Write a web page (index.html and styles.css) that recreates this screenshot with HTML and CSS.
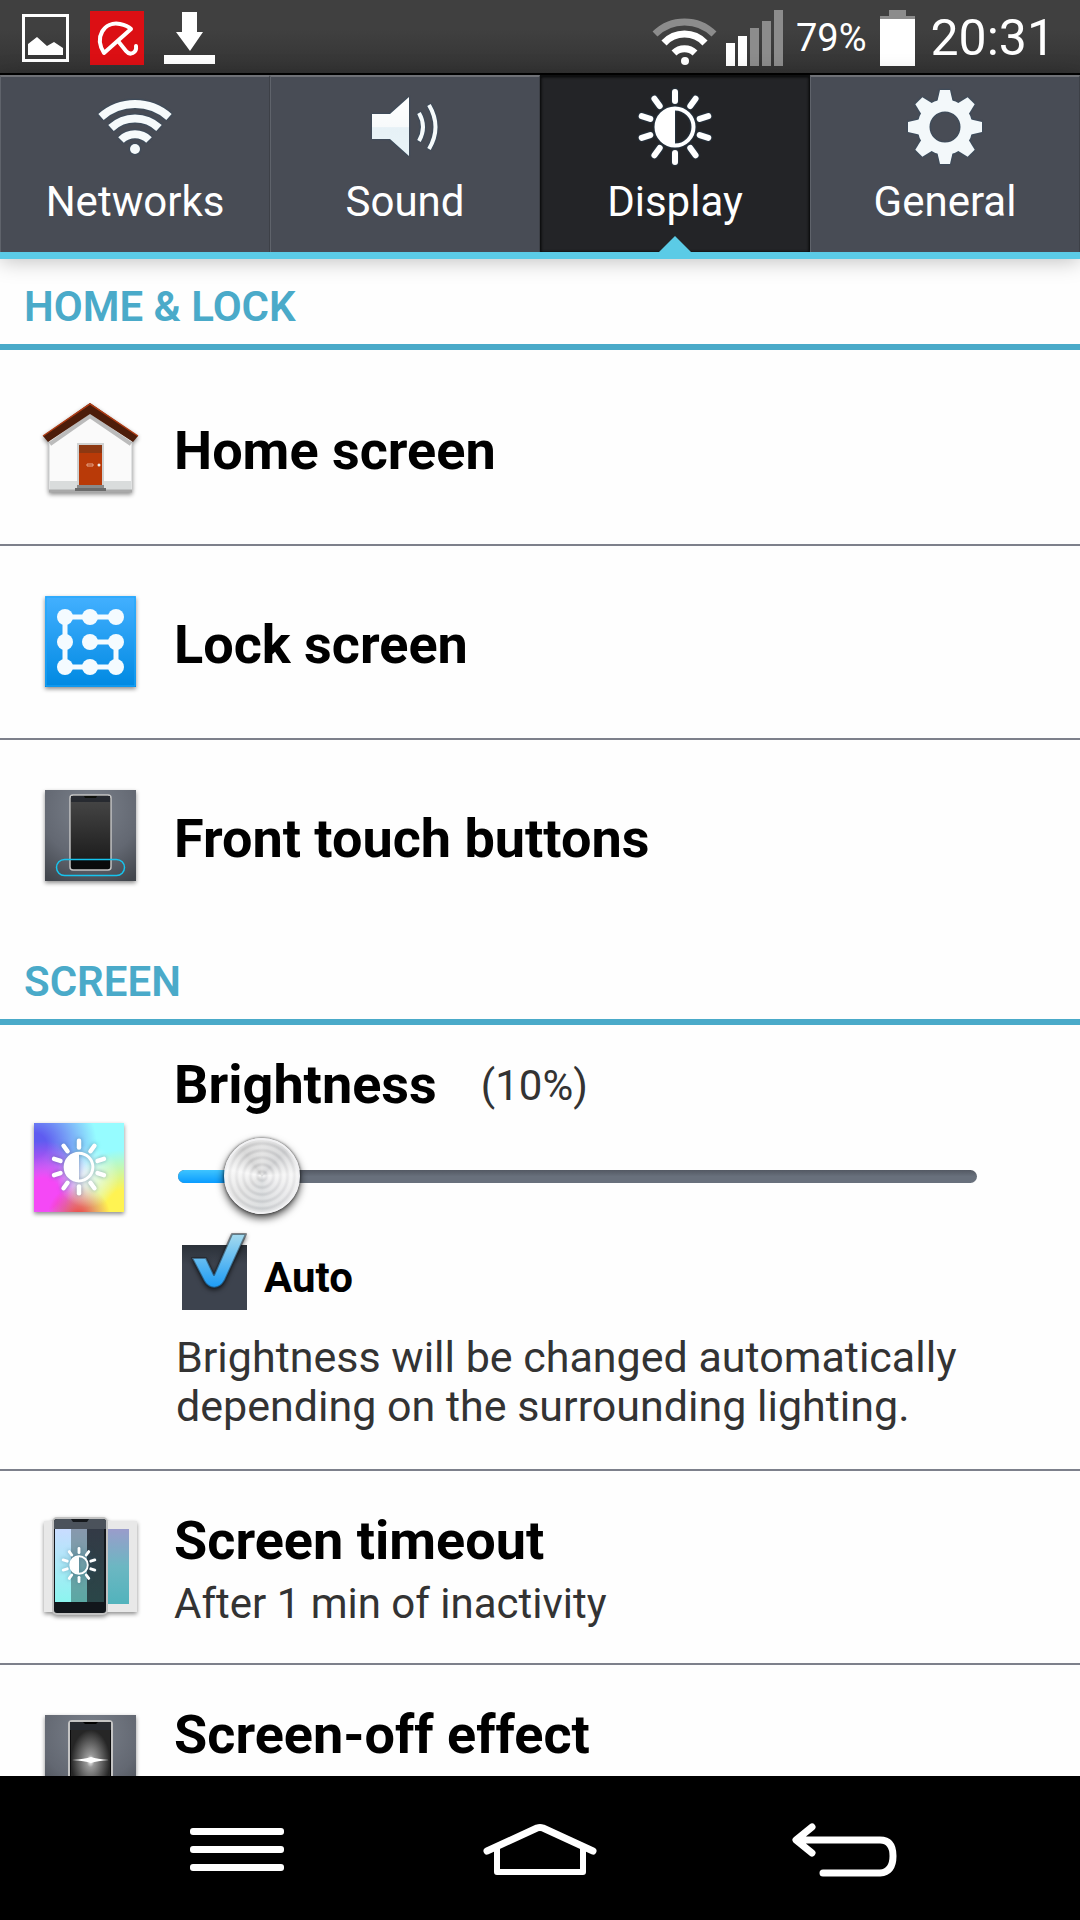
FILE: index.html
```html
<!DOCTYPE html>
<html lang="en">
<head>
    <meta charset="UTF-8">
    <meta name="viewport" content="width=device-width, initial-scale=1.0">
    <title>Settings - Display</title>
    <link rel="stylesheet" href="styles.css">
</head>
<body>
    <!-- shared shapes -->
    <svg class="defs" width="0" height="0" aria-hidden="true">
        <defs>
            <linearGradient id="gloss" x1="0" y1="0" x2="0" y2="1">
                <stop offset="0" stop-color="#fff"/>
                <stop offset=".5" stop-color="#f7fafb"/>
                <stop offset=".52" stop-color="#e6f1f6"/>
                <stop offset="1" stop-color="#e9f4f8"/>
            </linearGradient>
            <linearGradient id="blueTile" x1="0" y1="0" x2="0" y2="1">
                <stop offset="0" stop-color="#43b0ff"/>
                <stop offset="1" stop-color="#0089e2"/>
            </linearGradient>
            <radialGradient id="grayTile" cx=".5" cy=".2" r=".9">
                <stop offset="0" stop-color="#7b818b"/>
                <stop offset=".6" stop-color="#636872"/>
                <stop offset="1" stop-color="#41454c"/>
            </radialGradient>
            <linearGradient id="glass" x1="0" y1="0" x2="0" y2="1">
                <stop offset="0" stop-color="#444"/>
                <stop offset="1" stop-color="#1d1d1d"/>
            </linearGradient>
            <symbol id="sun" viewBox="-40 -40 80 80">
                <g stroke="currentColor" stroke-width="6" stroke-linecap="round">
                    <path d="M0-26V-35"/>
                    <path d="M0-26V-35" transform="rotate(36)"/>
                    <path d="M0-26V-35" transform="rotate(72)"/>
                    <path d="M0-26V-35" transform="rotate(108)"/>
                    <path d="M0-26V-35" transform="rotate(144)"/>
                    <path d="M0-26V-35" transform="rotate(180)"/>
                    <path d="M0-26V-35" transform="rotate(216)"/>
                    <path d="M0-26V-35" transform="rotate(252)"/>
                    <path d="M0-26V-35" transform="rotate(288)"/>
                    <path d="M0-26V-35" transform="rotate(324)"/>
                </g>
                <circle r="18.5" fill="none" stroke="currentColor" stroke-width="4"/>
                <path d="M0-18A18 18 0 0 0 0 18Z" fill="currentColor"/>
            </symbol>
        </defs>
    </svg>

    <div class="status-bar">
        <div class="status-left">
            <svg width="48" height="48" viewBox="0 0 48 48">
                <rect x="1.5" y="1.5" width="44" height="45" fill="none" stroke="#fff" stroke-width="3"/>
                <path d="M6 41V30L15 23L25 32L32 28L41 34V41Z" fill="#fff"/>
            </svg>
            <svg width="54" height="54" viewBox="0 0 54 54">
                <rect width="54" height="54" fill="#dc0f14"/>
                <path d="M14 42C4 26 14 10 30 13C35 14 38 15 41 18L14 42M28 30L36 40C40 45 47 42 46 35" fill="none" stroke="#fff" stroke-width="4" stroke-linejoin="round" stroke-linecap="round"/>
            </svg>
            <svg width="51" height="54" viewBox="0 0 51 54">
                <path d="M18 1H33V21H39L26 40L12 21H18ZM0 44H51V53H0Z" fill="#fff"/>
            </svg>
        </div>
        <div class="status-right">
            <svg width="65" height="56" viewBox="0 0 65 56" fill="none" stroke="#fff" stroke-width="7">
                <path d="M3 24A42 42 0 0 1 62 24" stroke="#8c8c8c"/>
                <path d="M12 33A28 28 0 0 1 53 33"/>
                <path d="M22 43A15 15 0 0 1 43 43"/>
                <circle cx="33" cy="51" r="4" fill="#fff" stroke="none"/>
            </svg>
            <svg class="signal" width="57" height="56" viewBox="0 0 57 56">
                <path d="M0 33h9v23h-9ZM12 26h9v30h-9Z" fill="#fff"/>
                <path d="M24 18h9v38h-9ZM36 11h9v45h-9ZM48 0h9v56h-9Z" fill="#8c8c8c"/>
            </svg>
            <span class="percent">79%</span>
            <svg width="35" height="56" viewBox="0 0 35 56">
                <path d="M9 0H26V6H35V9H0V6H9Z" fill="#8c8c8c"/>
                <path d="M0 9H35V56H0Z" fill="#fff"/>
            </svg>
            <span class="clock">20:31</span>
        </div>
    </div>

    <div class="tabs" role="tablist">
        <button class="tab" role="tab">
            <svg class="tab-icon" viewBox="0 0 80 80" fill="none" stroke="#f6fafb" stroke-width="8">
                <path d="M6 30A51 51 0 0 1 74 30"/>
                <path d="M16 41A35 35 0 0 1 64 41"/>
                <path d="M26 53A20 20 0 0 1 54 53"/>
                <circle cx="40" cy="62" r="5" fill="#f6fafb" stroke="none"/>
            </svg>
            Networks
        </button>
        <button class="tab" role="tab">
            <svg class="tab-icon" viewBox="0 0 80 80">
                <path d="M7 27H25L44 10V69L25 52H7Z" fill="url(#gloss)"/>
                <path d="M54 26Q62 40 54 54M64 18Q77 40 64 62" fill="none" stroke="#f6fafb" stroke-width="4"/>
            </svg>
            Sound
        </button>
        <button class="tab selected" role="tab" aria-selected="true">
            <svg class="tab-icon" viewBox="0 0 80 80"><use href="#sun"/></svg>
            Display
        </button>
        <button class="tab" role="tab">
            <svg class="tab-icon" viewBox="-40 -40 80 80" fill="#f3f8fa">
                <circle r="21.5" fill="none" stroke="#f3f8fa" stroke-width="12"/>
                <path id="tooth" d="M-5-37H5L8-24H-8Z"/>
                <use href="#tooth" transform="rotate(45)"/>
                <use href="#tooth" transform="rotate(90)"/>
                <use href="#tooth" transform="rotate(135)"/>
                <use href="#tooth" transform="rotate(180)"/>
                <use href="#tooth" transform="rotate(225)"/>
                <use href="#tooth" transform="rotate(270)"/>
                <use href="#tooth" transform="rotate(315)"/>
            </svg>
            General
        </button>
    </div>

    <main class="content">
        <h2 class="section-title">HOME &amp; LOCK</h2>
        <ul class="list">
            <li class="row">
                <svg class="row-icon" viewBox="0 0 98 98">
                    <path d="M8 38L49 10L91 38V92H8Z" fill="#fafafa" stroke="#c9cbcc"/>
                    <path d="M9 82H90V91H9Z" fill="#d9dcdc"/>
                    <path d="M8 92H91" stroke="#a9a9a9" stroke-width="3"/>
                    <path d="M9 45L49 17L90 45" fill="none" stroke="#000" stroke-opacity=".25" stroke-width="4"/>
                    <path d="M2 37L49 4L97 37L92 43L49 15L7 43Z" fill="#4d1d0a"/>
                    <path d="M2 37L49 5L97 37" fill="none" stroke="#b03c14" stroke-width="1.5"/>
                    <path d="M37 86V45H62V86" fill="#b93a08" stroke="#d0d2d2" stroke-width="2"/>
                    <path d="M38 46H61V54H38Z" fill="#8d3812"/>
                    <path d="M46 65H52V67H46Z" fill="none" stroke="#e5a58a"/>
                    <circle cx="58" cy="66" r="1.5" fill="#eee"/>
                    <path d="M36 86H63V89H36Z" fill="#8a8a8a"/>
                    <path d="M34 89H65V92H34Z" fill="#6b6b6b"/>
                </svg>
                <div class="row-text"><h3>Home screen</h3></div>
            </li>
            <li class="row">
                <svg class="row-icon" viewBox="0 0 98 98">
                    <rect x="4" y="3" width="91" height="91" fill="url(#blueTile)"/>
                    <path d="M5 4H94V93H5Z" fill="none" stroke="#1fa6fa" stroke-width="1"/>
                    <path d="M75 24H24V74H75V49H49" fill="none" stroke="#f4fbff" stroke-width="5"/>
                    <g fill="#f4fbff">
                        <circle cx="24" cy="24" r="8"/><circle cx="49" cy="24" r="8"/><circle cx="75" cy="24" r="8"/>
                        <circle cx="24" cy="49" r="8"/><circle cx="49" cy="49" r="8"/><circle cx="75" cy="49" r="8"/>
                        <circle cx="24" cy="74" r="8"/><circle cx="49" cy="74" r="8"/><circle cx="75" cy="74" r="8"/>
                    </g>
                </svg>
                <div class="row-text"><h3>Lock screen</h3></div>
            </li>
            <li class="row">
                <svg class="row-icon" viewBox="0 0 98 98">
                    <rect x="4" y="3" width="91" height="91" fill="url(#grayTile)"/>
                    <rect x="29" y="8" width="41" height="75" rx="3" fill="#0a0a0b" stroke="#c4c4c4" stroke-width="1.5"/>
                    <path d="M30 9H69V15H30Z" fill="#272a30"/>
                    <path d="M43 9H56L55 11H44Z" fill="#0d0f0a"/>
                    <path d="M30 15H69V73H30Z" fill="url(#glass)"/>
                    <rect x="15.5" y="72.5" width="68" height="16" rx="8" fill="none" stroke="#16c4ee" stroke-width="1.5"/>
                </svg>
                <div class="row-text"><h3>Front touch buttons</h3></div>
            </li>
        </ul>

        <h2 class="section-title">SCREEN</h2>
        <ul class="list">
            <li class="row brightness">
                <svg class="row-icon" viewBox="0 0 98 98">
                    <defs>
                        <radialGradient id="cBlue" cx="0" cy=".25" r=".7"><stop offset=".2" stop-color="#5f5cf0"/><stop offset="1" stop-color="#5f5cf0" stop-opacity="0"/></radialGradient>
                        <radialGradient id="cPink" cx=".1" cy=".8" r=".6"><stop offset=".3" stop-color="#f548f6"/><stop offset="1" stop-color="#f548f6" stop-opacity="0"/></radialGradient>
                        <radialGradient id="cYellow" cx="1" cy=".95" r=".65"><stop offset=".3" stop-color="#fff352"/><stop offset="1" stop-color="#fff352" stop-opacity="0"/></radialGradient>
                        <radialGradient id="cRed" cx=".5" cy="1.05" r=".35"><stop offset="0" stop-color="#f0403c"/><stop offset="1" stop-color="#f0403c" stop-opacity="0"/></radialGradient>
                        <radialGradient id="cWhite" cx=".6" cy=".6" r=".35"><stop offset="0" stop-color="#fff" stop-opacity=".8"/><stop offset="1" stop-color="#fff" stop-opacity="0"/></radialGradient>
                    </defs>
                    <rect x="4" y="4" width="90" height="89" fill="#96fcff"/>
                    <rect x="4" y="4" width="90" height="89" fill="url(#cBlue)"/>
                    <rect x="4" y="4" width="90" height="89" fill="url(#cPink)"/>
                    <rect x="4" y="4" width="90" height="89" fill="url(#cYellow)"/>
                    <rect x="4" y="4" width="90" height="89" fill="url(#cRed)"/>
                    <rect x="4" y="4" width="90" height="89" fill="url(#cWhite)"/>
                    <use class="sun-mark" href="#sun" x="19" y="18" width="60" height="60"/>
                </svg>
                <div class="row-text">
                    <div class="brightness-head">
                        <h3><label for="brightness">Brightness</label></h3>
                        <output class="sub" for="brightness">(10%)</output>
                    </div>
                    <div class="slider">
                        <div class="track"><div class="fill" style="width: 10%"></div></div>
                        <input type="range" id="brightness" min="0" max="100" value="10">
                    </div>
                    <div class="auto">
                        <span class="check">
                            <input type="checkbox" id="auto" checked>
                            <svg class="tick" viewBox="0 0 65 80">
                                <defs>
                                    <linearGradient id="tickBlue" x1="0" y1="0" x2="0" y2="1">
                                        <stop offset="0" stop-color="#a5daee"/>
                                        <stop offset="1" stop-color="#1c9bf5"/>
                                    </linearGradient>
                                </defs>
                                <path d="M10 28H24L32 45L50 4H64L43 50C38 60 27 60 22 51Z" fill="url(#tickBlue)" stroke="#1c2026" stroke-opacity=".5" stroke-width="2" stroke-linejoin="round"/>
                            </svg>
                        </span>
                        <label for="auto">Auto</label>
                    </div>
                    <p class="description">Brightness will be changed automatically depending on the surrounding lighting.</p>
                </div>
            </li>
            <li class="row">
                <svg class="row-icon" viewBox="0 0 98 98">
                    <defs>
                        <linearGradient id="s1" x1="0" y1="0" x2="0" y2="1"><stop offset="0" stop-color="#c9dcff"/><stop offset="1" stop-color="#8cf5ef"/></linearGradient>
                        <linearGradient id="s2" x1="0" y1="0" x2="0" y2="1"><stop offset="0" stop-color="#8898ad"/><stop offset="1" stop-color="#5ba8a3"/></linearGradient>
                        <linearGradient id="s3" x1="0" y1="0" x2="0" y2="1"><stop offset="0" stop-color="#333a46"/><stop offset="1" stop-color="#2a4648"/></linearGradient>
                        <linearGradient id="s4" x1="0" y1="0" x2="0" y2="1"><stop offset="0" stop-color="#9a9ccb"/><stop offset=".5" stop-color="#6cb7c2"/><stop offset="1" stop-color="#52b3bc"/></linearGradient>
                    </defs>
                    <rect x="3" y="3" width="93" height="91" fill="#e8e8e8"/>
                    <rect x="60" y="11" width="28" height="75" fill="url(#s4)"/>
                    <rect x="12" y="0" width="54" height="96" rx="4" fill="#12161b" stroke="#c2c2c2" stroke-width="2"/>
                    <path d="M13 4Q13 1 16 1H62Q65 1 65 4V11H13Z" fill="#4b525b"/>
                    <path d="M30 1H48L46 4H32Z" fill="#15181c"/>
                    <rect x="14" y="11" width="16" height="73" fill="url(#s1)"/>
                    <rect x="30" y="11" width="16" height="73" fill="url(#s2)"/>
                    <rect x="46" y="11" width="17" height="73" fill="url(#s3)"/>
                    <use class="sun-mark" href="#sun" x="19" y="28" width="38" height="38"/>
                </svg>
                <div class="row-text">
                    <h3>Screen timeout</h3>
                    <p class="sub">After 1 min of inactivity</p>
                </div>
            </li>
            <li class="row row-top">
                <svg class="row-icon" viewBox="0 0 98 98">
                    <defs>
                        <radialGradient id="glow"><stop offset="0" stop-color="#fff"/><stop offset=".2" stop-color="#999"/><stop offset="1" stop-color="#262626"/></radialGradient>
                    </defs>
                    <rect x="4" y="3" width="91" height="91" fill="url(#grayTile)"/>
                    <rect x="28" y="9" width="43" height="84" rx="3" fill="#0a0a0b" stroke="#c4c4c4" stroke-width="2"/>
                    <path d="M29 10H70V18H29Z" fill="#272a30"/>
                    <path d="M42 10H57L55 12H44Z" fill="#000"/>
                    <rect x="30" y="18" width="39" height="62" fill="url(#glow)"/>
                    <path d="M31 48Q44 47 50 45Q56 47 68 48Q56 49 50 51Q44 49 31 48Z" fill="#fff"/>
                </svg>
                <div class="row-text"><h3>Screen-off effect</h3></div>
            </li>
        </ul>
    </main>

    <nav class="nav-bar">
        <button aria-label="Menu">
            <svg width="94" height="44" viewBox="0 0 94 44" fill="#fff">
                <rect width="94" height="7" rx="3"/>
                <rect y="18" width="94" height="7" rx="3"/>
                <rect y="36" width="94" height="7" rx="3"/>
            </svg>
        </button>
        <button aria-label="Home">
            <svg width="114" height="52" viewBox="0 0 114 52" fill="none" stroke="#fff" stroke-width="7" stroke-linecap="round" stroke-linejoin="round">
                <path d="M4 27L54 4Q57 3 60 4L110 27"/>
                <path d="M14 24V48H100V24" stroke-width="6"/>
            </svg>
        </button>
        <button aria-label="Back">
            <svg width="102" height="54" viewBox="0 0 102 54" fill="none" stroke="#fff" stroke-width="7" stroke-linecap="round" stroke-linejoin="round">
                <path d="M20 4L4 17L20 30M6 17H88Q101 17 101 33T88 50H31"/>
            </svg>
        </button>
    </nav>
</body>
</html>
```
FILE: styles.css
```css
* {
    box-sizing: border-box;
}
body {
    font-family: Roboto, "Noto Sans", sans-serif;
    font-size: 42px;
    margin: 0;
    height: 100vh;
    display: flex;
    flex-direction: column;
    background-color: #fefefe;
    color: #000;
    overflow: hidden;
}
svg {
    display: block;
    overflow: visible;
}
h2, h3, p, ul {
    margin: 0;
    padding: 0;
}
button {
    font: inherit;
    border: none;
    background: none;
    cursor: pointer;
}
.defs {
    position: absolute;
}

/* status bar */
.status-bar {
    display: flex;
    justify-content: space-between;
    align-items: center;
    height: 75px;
    padding: 2px 25px 0 22px;
    border-bottom: 2px solid #000;
    background: linear-gradient(#404040 40%, #333);
    color: #fff;
    flex: none;
}
.status-left, .status-right {
    display: flex;
    align-items: center;
}
.status-left {
    gap: 20px;
}
.signal {
    margin: 0 13px 0 9px;
}
.percent {
    font-size: 38px;
    margin-right: 14px;
}
.clock {
    font-size: 50px;
    margin-left: 15px;
}

/* tabs */
.tabs {
    display: grid;
    grid-template-columns: repeat(4, 1fr);
    height: 184px;
    flex: none;
    border-bottom: 7px solid #5bcbe6;
    box-shadow: 0 2px 20px rgba(0, 0, 0, 0.25);
    z-index: 1;
}
.tab {
    position: relative;
    display: flex;
    flex-direction: column;
    align-items: center;
    gap: 10px;
    padding: 10px 0 0;
    line-height: 50px;
    color: #fff;
    background-color: #484c55;
    border-top: 2px solid #6f7176;
    border-left: 1px solid #5f636b;
    border-right: 1px solid #3d4047;
}
.tab.selected {
    background-color: #232427;
    border-color: #0e0f10;
    box-shadow: inset 0 0 3px #000;
}
.tab.selected::after {
    content: "";
    position: absolute;
    bottom: 0;
    left: 50%;
    margin-left: -16px;
    border: 16px solid transparent;
    border-top-width: 0;
    border-bottom-color: #5bcbe6;
}
.tab-icon {
    width: 80px;
    height: 80px;
    filter: drop-shadow(0 0 1px #2c4a63);
}

/* list */
.content {
    flex: 1;
    min-height: 0;
    overflow: hidden;
}
.section-title {
    height: 91px;
    padding: 23px 24px 0;
    font-size: 42px;
    font-weight: 600;
    line-height: 50px;
    color: #4aaac9;
    border-bottom: 6px solid #4aaac9;
}
.list {
    list-style: none;
    padding-top: 2px;
}
.row {
    display: flex;
    align-items: center;
    gap: 35px;
    min-height: 194px;
    padding: 0 41px;
    border-bottom: 2px solid #7d808b;
}
.row:last-child {
    border-bottom-color: transparent;
}
.row-icon {
    width: 98px;
    height: 98px;
    flex: none;
    filter: drop-shadow(0 2px 2px rgba(0, 0, 0, 0.45));
}
.row-text {
    flex: 1;
    padding-top: 6px;
}
.row-text h3 {
    font-size: 54px;
    font-weight: 700;
    line-height: 60px;
}
.sub {
    margin-top: 8px;
    line-height: 50px;
    color: #333;
}
.row-top {
    align-items: flex-start;
    padding-top: 34px;
}
.row-top .row-icon {
    margin-top: 13px;
}
.sun-mark {
    color: #fff;
    filter: drop-shadow(0 0 2px rgba(40, 90, 120, 0.5));
}

/* brightness */
.brightness {
    align-items: flex-start;
    gap: 46px;
    padding: 22px 103px 38px 30px;
}
.brightness .row-icon {
    margin-top: 70px;
}
.brightness-head {
    display: flex;
    align-items: center;
    gap: 44px;
}
.brightness-head .sub {
    margin-top: 2px;
}
.slider {
    display: grid;
    align-items: center;
    margin: 23px 0 0 4px;
}
.track, .slider input {
    grid-area: 1 / 1;
}
.track {
    height: 13px;
    border-radius: 7px;
    background: linear-gradient(#535963, #68707c 50%);
    overflow: hidden;
}
.fill {
    height: 13px;
    background: linear-gradient(#3ec4ff, #0a9cff);
}
/* the thumb may travel past both ends of the track */
.slider input {
    appearance: none;
    height: 76px;
    margin: 0 -33px;
    background: none;
}
.slider input::-webkit-slider-thumb {
    appearance: none;
    width: 76px;
    height: 76px;
    border-radius: 50%;
    background:
        repeating-radial-gradient(circle, rgba(255, 255, 255, 0.3) 0 2px, rgba(170, 170, 175, 0.12) 4px 5px, rgba(255, 255, 255, 0.3) 7px),
        conic-gradient(#dadada, #c9cacc 12%, #f4f4f4 24%, #e3e3e5 35%, #cfd2d4 50%, #dcdcdc 65%, #f6f6f6 78%, #c9c9c9 90%, #dadada);
    border: 2px solid #f1f1f3;
    box-shadow: 0 0 3px rgba(0, 0, 0, 0.7), 0 4px 8px rgba(0, 0, 0, 0.75);
}
.auto {
    display: flex;
    align-items: center;
    gap: 17px;
    margin: 31px 0 0 8px;
    font-weight: 700;
}
.check {
    position: relative;
    width: 65px;
    height: 65px;
}
.check input {
    appearance: none;
    display: block;
    width: 65px;
    height: 65px;
    margin: 0;
    background: linear-gradient(#2b3139, #3d434e 30%);
}
.tick {
    position: absolute;
    left: 0;
    bottom: 0;
    width: 65px;
    height: 80px;
    pointer-events: none;
    filter: drop-shadow(0 2px 2px rgba(0, 0, 0, 0.6));
}
.check input:not(:checked) + .tick {
    display: none;
}
.description {
    margin: 23px 0 0 2px;
    font-size: 43px;
    line-height: 49px;
    color: #333;
}

/* navigation */
.nav-bar {
    display: grid;
    grid-template-columns: repeat(3, 1fr);
    place-items: center;
    height: 144px;
    padding: 4px 85px 0;
    background-color: #000;
    flex: none;
}
```
